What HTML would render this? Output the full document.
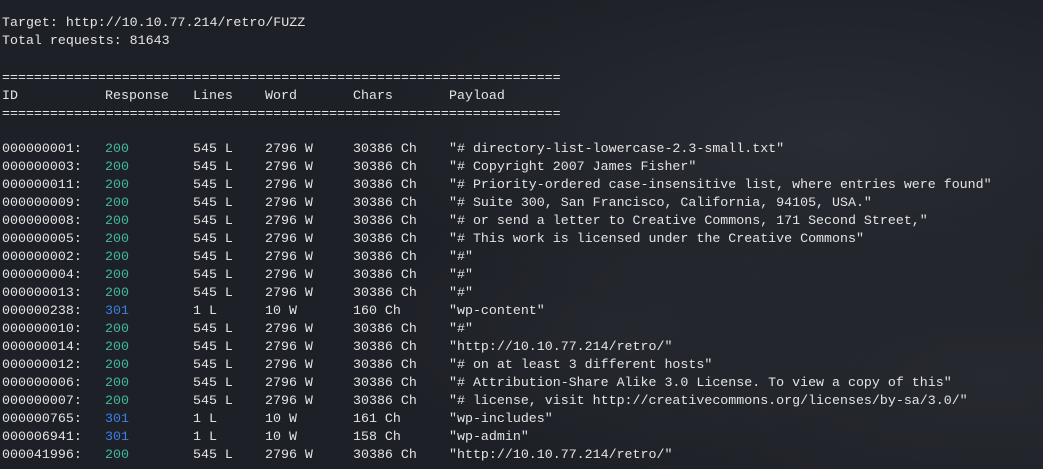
<!DOCTYPE html>
<html><head><meta charset="utf-8"><style>
html,body{margin:0;padding:0}
body{width:1043px;height:469px;overflow:hidden;background:#1e2027;font-family:"Liberation Mono","DejaVu Sans Mono",monospace;font-size:13.3px;color:#e4e4e4;position:relative}
.bg{position:absolute;inset:0;background:radial-gradient(ellipse at 80% 30%,#2a2c34 0%,transparent 40%),radial-gradient(ellipse at 95% 80%,#272930 0%,transparent 35%),radial-gradient(ellipse at 60% 70%,#25272e 0%,transparent 30%)}
.w{position:absolute;left:0;top:2px;width:1043px}
.l{position:absolute;left:0;height:18px;line-height:18px;white-space:pre;width:1043px}
.l span{position:absolute;top:0}
.a{left:2px}.b{left:105px}.c{left:193px}.d{left:265px}.e{left:353px}.f{left:449px}
.g{color:#42b99c}.u{color:#3b7fe6}
</style></head><body><div class="bg"></div><div class="w">
<div class="l" style="top:12px"><span class="a">Target: http://10.10.77.214/retro/FUZZ</span></div>
<div class="l" style="top:30px"><span class="a">Total requests: 81643</span></div>
<div class="l" style="top:67px"><span class="a">======================================================================</span></div>
<div class="l" style="top:85px"><span class="a">ID</span><span class="b">Response</span><span class="c">Lines</span><span class="d">Word</span><span class="e">Chars</span><span class="f">Payload</span></div>
<div class="l" style="top:103px"><span class="a">======================================================================</span></div>

<div class="l" style="top:138px"><span class="a">000000001:</span><span class="b g">200</span><span class="c">545 L</span><span class="d">2796 W</span><span class="e">30386 Ch</span><span class="f">"# directory-list-lowercase-2.3-small.txt"</span></div>
<div class="l" style="top:156px"><span class="a">000000003:</span><span class="b g">200</span><span class="c">545 L</span><span class="d">2796 W</span><span class="e">30386 Ch</span><span class="f">"# Copyright 2007 James Fisher"</span></div>
<div class="l" style="top:174px"><span class="a">000000011:</span><span class="b g">200</span><span class="c">545 L</span><span class="d">2796 W</span><span class="e">30386 Ch</span><span class="f">"# Priority-ordered case-insensitive list, where entries were found"</span></div>
<div class="l" style="top:192px"><span class="a">000000009:</span><span class="b g">200</span><span class="c">545 L</span><span class="d">2796 W</span><span class="e">30386 Ch</span><span class="f">"# Suite 300, San Francisco, California, 94105, USA."</span></div>
<div class="l" style="top:210px"><span class="a">000000008:</span><span class="b g">200</span><span class="c">545 L</span><span class="d">2796 W</span><span class="e">30386 Ch</span><span class="f">"# or send a letter to Creative Commons, 171 Second Street,"</span></div>
<div class="l" style="top:228px"><span class="a">000000005:</span><span class="b g">200</span><span class="c">545 L</span><span class="d">2796 W</span><span class="e">30386 Ch</span><span class="f">"# This work is licensed under the Creative Commons"</span></div>
<div class="l" style="top:246px"><span class="a">000000002:</span><span class="b g">200</span><span class="c">545 L</span><span class="d">2796 W</span><span class="e">30386 Ch</span><span class="f">"#"</span></div>
<div class="l" style="top:264px"><span class="a">000000004:</span><span class="b g">200</span><span class="c">545 L</span><span class="d">2796 W</span><span class="e">30386 Ch</span><span class="f">"#"</span></div>
<div class="l" style="top:282px"><span class="a">000000013:</span><span class="b g">200</span><span class="c">545 L</span><span class="d">2796 W</span><span class="e">30386 Ch</span><span class="f">"#"</span></div>
<div class="l" style="top:300px"><span class="a">000000238:</span><span class="b u">301</span><span class="c">1 L</span><span class="d">10 W</span><span class="e">160 Ch</span><span class="f">"wp-content"</span></div>
<div class="l" style="top:318px"><span class="a">000000010:</span><span class="b g">200</span><span class="c">545 L</span><span class="d">2796 W</span><span class="e">30386 Ch</span><span class="f">"#"</span></div>
<div class="l" style="top:336px"><span class="a">000000014:</span><span class="b g">200</span><span class="c">545 L</span><span class="d">2796 W</span><span class="e">30386 Ch</span><span class="f">"http://10.10.77.214/retro/"</span></div>
<div class="l" style="top:354px"><span class="a">000000012:</span><span class="b g">200</span><span class="c">545 L</span><span class="d">2796 W</span><span class="e">30386 Ch</span><span class="f">"# on at least 3 different hosts"</span></div>
<div class="l" style="top:372px"><span class="a">000000006:</span><span class="b g">200</span><span class="c">545 L</span><span class="d">2796 W</span><span class="e">30386 Ch</span><span class="f">"# Attribution-Share Alike 3.0 License. To view a copy of this"</span></div>
<div class="l" style="top:390px"><span class="a">000000007:</span><span class="b g">200</span><span class="c">545 L</span><span class="d">2796 W</span><span class="e">30386 Ch</span><span class="f">"# license, visit http://creativecommons.org/licenses/by-sa/3.0/"</span></div>
<div class="l" style="top:408px"><span class="a">000000765:</span><span class="b u">301</span><span class="c">1 L</span><span class="d">10 W</span><span class="e">161 Ch</span><span class="f">"wp-includes"</span></div>
<div class="l" style="top:426px"><span class="a">000006941:</span><span class="b u">301</span><span class="c">1 L</span><span class="d">10 W</span><span class="e">158 Ch</span><span class="f">"wp-admin"</span></div>
<div class="l" style="top:444px"><span class="a">000041996:</span><span class="b g">200</span><span class="c">545 L</span><span class="d">2796 W</span><span class="e">30386 Ch</span><span class="f">"http://10.10.77.214/retro/"</span></div>
</div></body></html>
